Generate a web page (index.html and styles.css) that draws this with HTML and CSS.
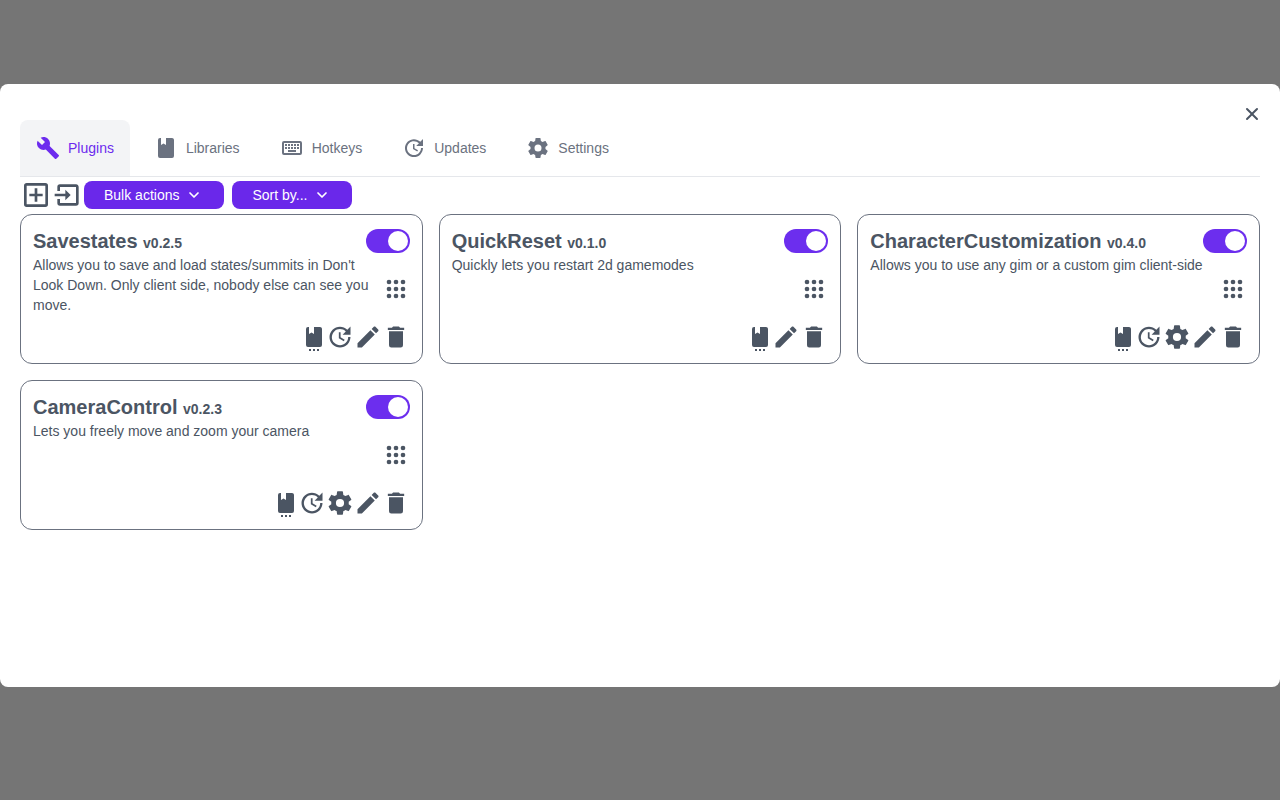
FILE: index.html
```html
<!DOCTYPE html>
<html lang="en">
<head>
    <meta charset="UTF-8">
    <meta name="viewport" content="width=device-width, initial-scale=1.0">
    <title>Plugins</title>
    <link rel="stylesheet" href="styles.css">
</head>
<body>
    <!-- shared icons -->
    <svg class="sprite" aria-hidden="true">
        <symbol id="wrench" viewBox="0 0 24 24"><path d="M22.7,19L13.6,9.9C14.5,7.6 14,4.9 12.1,3C10.1,1 7.1,0.6 4.7,1.7L9,6L6,9L1.6,4.7C0.4,7.1 0.9,10.1 2.9,12.1C4.8,14 7.5,14.5 9.8,13.6L18.9,22.7C19.3,23.1 19.9,23.1 20.3,22.7L22.6,20.4C23.1,20 23.1,19.3 22.7,19Z"/></symbol>
        <symbol id="book" viewBox="0 0 24 24"><path d="M18,22A2,2 0 0,0 20,20V4C20,2.89 19.1,2 18,2H12V9L9.5,7.5L7,9V2H6A2,2 0 0,0 4,4V20A2,2 0 0,0 6,22H18Z"/></symbol>
        <symbol id="book-dots" viewBox="0 0 24 24"><path d="M18,20A2,2 0 0,0 20,18V2C20,0.89 19.1,0 18,0H12V7L9.5,5.5L7,7V0H6A2,2 0 0,0 4,2V18A2,2 0 0,0 6,20H18M7,22H9V24H7V22M11,22H13V24H11V22M15,22H17V24H15V22Z"/></symbol>
        <symbol id="keyboard" viewBox="0 0 24 24"><path d="M4,5A2,2 0 0,0 2,7V17A2,2 0 0,0 4,19H20A2,2 0 0,0 22,17V7A2,2 0 0,0 20,5H4M4,7H20V17H4V7M5,8V10H7V8H5M8,8V10H10V8H8M11,8V10H13V8H11M14,8V10H16V8H14M17,8V10H19V8H17M5,11V13H7V11H5M8,11V13H10V11H8M11,11V13H13V11H11M14,11V13H16V11H14M17,11V13H19V11H17M8,14V16H16V14H8Z"/></symbol>
        <symbol id="update" viewBox="0 0 24 24"><path d="M21,10.12H14.22L16.96,7.3C14.23,4.6 9.81,4.5 7.08,7.2C4.35,9.91 4.35,14.28 7.08,17C9.81,19.7 14.23,19.7 16.96,17C18.32,15.65 19,14.08 19,12.1H21C21,14.08 20.12,16.65 18.36,18.39C14.85,21.87 9.15,21.87 5.64,18.39C2.14,14.92 2.11,9.28 5.62,5.81C9.13,2.34 14.76,2.34 18.27,5.81L21,3V10.12M12.5,8V12.25L16,14.33L15.28,15.54L11,13V8H12.5Z"/></symbol>
        <symbol id="cog" viewBox="0 0 24 24"><path d="M12,15.5A3.5,3.5 0 0,1 8.5,12A3.5,3.5 0 0,1 12,8.5A3.5,3.5 0 0,1 15.5,12A3.5,3.5 0 0,1 12,15.5M19.43,12.97C19.47,12.65 19.5,12.33 19.5,12C19.5,11.67 19.47,11.34 19.43,11L21.54,9.37C21.73,9.22 21.78,8.95 21.66,8.73L19.66,5.27C19.54,5.05 19.27,4.96 19.05,5.05L16.56,6.05C16.04,5.66 15.5,5.32 14.87,5.07L14.5,2.42C14.46,2.18 14.25,2 14,2H10C9.75,2 9.54,2.18 9.5,2.42L9.13,5.07C8.5,5.32 7.96,5.66 7.44,6.05L4.95,5.05C4.73,4.96 4.46,5.05 4.34,5.27L2.34,8.73C2.21,8.95 2.27,9.22 2.46,9.37L4.57,11C4.53,11.34 4.5,11.67 4.5,12C4.5,12.33 4.53,12.65 4.57,12.97L2.46,14.63C2.27,14.78 2.21,15.05 2.34,15.27L4.34,18.73C4.46,18.95 4.73,19.03 4.95,18.95L7.44,17.94C7.96,18.34 8.5,18.68 9.13,18.93L9.5,21.58C9.54,21.82 9.75,22 10,22H14C14.25,22 14.46,21.82 14.5,21.58L14.87,18.93C15.5,18.67 16.04,18.34 16.56,17.94L19.05,18.95C19.27,19.03 19.54,18.95 19.66,18.73L21.66,15.27C21.78,15.05 21.73,14.78 21.54,14.63L19.43,12.97Z"/></symbol>
        <symbol id="pencil" viewBox="0 0 24 24"><path d="M20.71,7.04C21.1,6.65 21.1,6 20.71,5.63L18.37,3.29C18,2.9 17.35,2.9 16.96,3.29L15.12,5.12L18.87,8.87M3,17.25V21H6.75L17.81,9.93L14.06,6.18L3,17.25Z"/></symbol>
        <symbol id="trash" viewBox="0 0 24 24"><path d="M19,4H15.5L14.5,3H9.5L8.5,4H5V6H19M6,19A2,2 0 0,0 8,21H16A2,2 0 0,0 18,19V7H6V19Z"/></symbol>
        <symbol id="plus-box" viewBox="0 0 24 24"><path d="M19,19V5H5V19H19M19,3A2,2 0 0,1 21,5V19A2,2 0 0,1 19,21H5A2,2 0 0,1 3,19V5C3,3.89 3.9,3 5,3H19M11,7H13V11H17V13H13V17H11V13H7V11H11V7Z"/></symbol>
        <symbol id="import" viewBox="0 0 24 24"><path d="M14,12L10,8V11H2V13H10V16M20,18V6C20,4.89 19.1,4 18,4H6A2,2 0 0,0 4,6V9H6V6H18V18H6V15H4V18A2,2 0 0,0 6,20H18A2,2 0 0,0 20,18Z"/></symbol>
        <symbol id="grid" viewBox="0 0 24 24">
            <circle cx="6" cy="6" r="2"/><circle cx="12" cy="6" r="2"/><circle cx="18" cy="6" r="2"/>
            <circle cx="6" cy="12" r="2"/><circle cx="12" cy="12" r="2"/><circle cx="18" cy="12" r="2"/>
            <circle cx="6" cy="18" r="2"/><circle cx="12" cy="18" r="2"/><circle cx="18" cy="18" r="2"/>
        </symbol>
        <symbol id="chevron" viewBox="0 0 12 12"><path d="M2 4l4 4 4-4" fill="none" stroke="currentColor" stroke-width="1.7" stroke-linecap="round" stroke-linejoin="round"/></symbol>
        <symbol id="close" viewBox="0 0 20 20"><path fill-rule="evenodd" d="M4.293 4.293a1 1 0 011.414 0L10 8.586l4.293-4.293a1 1 0 111.414 1.414L11.414 10l4.293 4.293a1 1 0 01-1.414 1.414L10 11.414l-4.293 4.293a1 1 0 01-1.414-1.414L8.586 10 4.293 5.707a1 1 0 010-1.414z"/></symbol>
    </svg>

    <main class="modal">
        <button class="close" aria-label="Close"><svg><use href="#close"/></svg></button>

        <nav class="tabs">
            <button class="tab active"><svg><use href="#wrench"/></svg>Plugins</button>
            <button class="tab"><svg><use href="#book"/></svg>Libraries</button>
            <button class="tab"><svg><use href="#keyboard"/></svg>Hotkeys</button>
            <button class="tab"><svg><use href="#update"/></svg>Updates</button>
            <button class="tab"><svg><use href="#cog"/></svg>Settings</button>
        </nav>

        <div class="toolbar">
            <button class="tool" aria-label="New plugin"><svg><use href="#plus-box"/></svg></button>
            <button class="tool" aria-label="Import plugin"><svg><use href="#import"/></svg></button>
            <button class="dropdown">Bulk actions<svg><use href="#chevron"/></svg></button>
            <button class="dropdown">Sort by...<svg><use href="#chevron"/></svg></button>
        </div>

        <div class="cards">
            <section class="card">
                <div class="card-head">
                    <h2>Savestates <span class="version">v0.2.5</span></h2>
                    <input type="checkbox" class="toggle" aria-label="Enable Savestates" checked>
                </div>
                <div class="card-body">
                    <p>Allows you to save and load states/summits in Don't Look Down. Only client side, nobody else can see you move.</p>
                    <svg class="drag"><use href="#grid"/></svg>
                </div>
                <div class="actions">
                    <button class="libs" aria-label="Libraries"><svg><use href="#book-dots"/></svg></button>
                    <button aria-label="Update"><svg><use href="#update"/></svg></button>
                    <button aria-label="Edit"><svg><use href="#pencil"/></svg></button>
                    <button aria-label="Delete"><svg><use href="#trash"/></svg></button>
                </div>
            </section>

            <section class="card">
                <div class="card-head">
                    <h2>QuickReset <span class="version">v0.1.0</span></h2>
                    <input type="checkbox" class="toggle" aria-label="Enable QuickReset" checked>
                </div>
                <div class="card-body">
                    <p>Quickly lets you restart 2d gamemodes</p>
                    <svg class="drag"><use href="#grid"/></svg>
                </div>
                <div class="actions">
                    <button class="libs" aria-label="Libraries"><svg><use href="#book-dots"/></svg></button>
                    <button aria-label="Edit"><svg><use href="#pencil"/></svg></button>
                    <button aria-label="Delete"><svg><use href="#trash"/></svg></button>
                </div>
            </section>

            <section class="card">
                <div class="card-head">
                    <h2>CharacterCustomization <span class="version">v0.4.0</span></h2>
                    <input type="checkbox" class="toggle" aria-label="Enable CharacterCustomization" checked>
                </div>
                <div class="card-body">
                    <p>Allows you to use any gim or a custom gim client-side</p>
                    <svg class="drag"><use href="#grid"/></svg>
                </div>
                <div class="actions">
                    <button class="libs" aria-label="Libraries"><svg><use href="#book-dots"/></svg></button>
                    <button aria-label="Update"><svg><use href="#update"/></svg></button>
                    <button aria-label="Settings"><svg><use href="#cog"/></svg></button>
                    <button aria-label="Edit"><svg><use href="#pencil"/></svg></button>
                    <button aria-label="Delete"><svg><use href="#trash"/></svg></button>
                </div>
            </section>

            <section class="card">
                <div class="card-head">
                    <h2>CameraControl <span class="version">v0.2.3</span></h2>
                    <input type="checkbox" class="toggle" aria-label="Enable CameraControl" checked>
                </div>
                <div class="card-body">
                    <p>Lets you freely move and zoom your camera</p>
                    <svg class="drag"><use href="#grid"/></svg>
                </div>
                <div class="actions">
                    <button class="libs" aria-label="Libraries"><svg><use href="#book-dots"/></svg></button>
                    <button aria-label="Update"><svg><use href="#update"/></svg></button>
                    <button aria-label="Settings"><svg><use href="#cog"/></svg></button>
                    <button aria-label="Edit"><svg><use href="#pencil"/></svg></button>
                    <button aria-label="Delete"><svg><use href="#trash"/></svg></button>
                </div>
            </section>
        </div>
    </main>
</body>
</html>
```
FILE: styles.css
```css
*{
    box-sizing: border-box;
}
body{
    margin: 0;
    min-height: 100vh;
    padding: 84px 0 113px;
    display: flex;
    flex-direction: column;
    background-color: #757575;
    color: #4b5563;
    font-family: "Liberation Sans", Arial, sans-serif;
    font-size: 14px;
    line-height: 20px;
}
h2, p{
    margin: 0;
}
button{
    padding: 0;
    border: none;
    background: none;
    color: inherit;
    font: inherit;
    cursor: pointer;
}
svg{
    display: block;
    flex-shrink: 0;
    fill: currentColor;
}
.sprite{
    display: none;
}

.modal{
    position: relative;
    flex: 1;
    padding: 36px 20px 20px;
    background-color: white;
    border-radius: 8px;
}
.close{
    position: absolute;
    top: 14px;
    right: 12px;
    padding: 6px;
}
.close svg{
    width: 20px;
    height: 20px;
}

.tabs{
    display: flex;
    gap: 8px;
    border-bottom: 1px solid #e5e7eb;
}
.tab{
    display: flex;
    align-items: center;
    gap: 8px;
    padding: 16px;
    color: #6b7280;
    border-radius: 8px 8px 0 0;
}
.tab svg{
    width: 24px;
    height: 24px;
}
.tab.active{
    background-color: #f3f4f6;
    color: #6c2bee;
}

.toolbar{
    display: flex;
    align-items: center;
    padding: 2px 0 3px;
}
.tool svg{
    width: 32px;
    height: 32px;
}
.dropdown{
    display: flex;
    align-items: center;
    margin-right: 8px;
    padding: 4px 20px;
    background-color: #6a28ea;
    color: white;
    border-radius: 8px;
}
.dropdown svg{
    width: 12px;
    height: 12px;
    margin: 0 4px 0 9px;
}

.cards{
    display: grid;
    grid-template-columns: repeat(3, 1fr);
    gap: 16px;
}
.card{
    display: flex;
    flex-direction: column;
    min-height: 150px;
    padding: 12px;
    border: 1px solid #6b7280;
    border-radius: 12px;
}
.card-head{
    display: flex;
    align-items: center;
    justify-content: space-between;
}
.card h2{
    font-size: 20px;
    line-height: 28px;
}
.card .version{
    font-size: 14px;
    line-height: 20px;
}
.toggle{
    appearance: none;
    display: flex;
    width: 44px;
    height: 24px;
    margin: 0;
    padding: 2px;
    background-color: #9ca3af;
    border-radius: 12px;
    cursor: pointer;
}
.toggle::after{
    content: "";
    width: 20px;
    height: 20px;
    background-color: white;
    border-radius: 50%;
}
.toggle:checked{
    justify-content: flex-end;
    background-color: #6c2eee;
}
.card-body{
    display: flex;
    flex: 1;
}
.card-body p{
    flex: 1;
}
.drag{
    align-self: center;
    width: 28px;
    height: 28px;
}
.actions{
    display: flex;
    justify-content: flex-end;
    align-items: flex-end;
}
.actions svg{
    width: 28px;
    height: 28px;
}
.actions .libs svg{
    width: 24px;
    height: 24px;
}
```
